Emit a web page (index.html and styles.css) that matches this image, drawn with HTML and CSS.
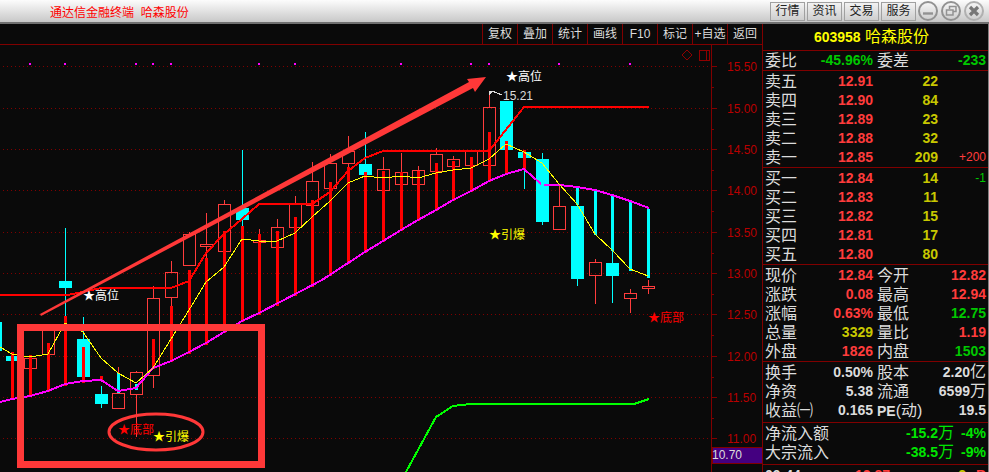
FILE: index.html
```html
<!DOCTYPE html>
<html lang="zh-CN">
<head>
    <meta charset="UTF-8">
    <meta name="viewport" content="width=device-width, initial-scale=1.0">
    <title>通达信金融终端 哈森股份</title>
    <link rel="stylesheet" href="styles.css">
</head>
<body>
    <header class="titlebar">
        <h1>通达信金融终端&nbsp;&nbsp;哈森股份</h1>
        <nav class="menu">
            <button type="button">行情</button>
            <button type="button">资讯</button>
            <button type="button">交易</button>
            <button type="button">服务</button>
        </nav>
        <div class="window-buttons">
            <button type="button" aria-label="最小化">
                <svg viewBox="0 0 20 20"><circle cx="10" cy="10" r="9"/><path d="M5 12.5h10" stroke-width="2.4"/></svg>
            </button>
            <button type="button" aria-label="还原">
                <svg viewBox="0 0 20 20"><circle cx="10" cy="10" r="9"/><path d="M8.5 8V5.5h6.500v5H12.500M5.500 9h6.500v5h-6.500z" stroke-width="1.500"/></svg>
            </button>
            <button type="button" aria-label="关闭">
                <svg viewBox="0 0 20 20"><circle cx="10" cy="10" r="9" stroke="#b0b0b0"/><path d="M6 6l8 8M14 6l-8 8" stroke-width="3.200" stroke="#777"/></svg>
            </button>
        </div>
    </header>

    <main class="main">
        <section class="chart-panel">
            <div class="toolbar">
                <button type="button">复权</button>
                <button type="button">叠加</button>
                <button type="button">统计</button>
                <button type="button">画线</button>
                <button type="button">F10</button>
                <button type="button">标记</button>
                <button type="button">+自选</button>
                <button type="button">返回</button>
            </div>
            <svg class="chart" id="chart" viewBox="0 45 762 427" preserveAspectRatio="xMinYMin meet">
                <g id="grid" class="grid"></g>
                <g class="corner-icons">
                    <path d="M687 50l5 5-5 5-5-5z"/>
                    <path d="M699 50h10v10h-10zM706 50v10"/>
                </g>
                <g id="dots" class="dots"></g>
                <g id="candles" class="candles" transform="translate(.5 .5)"></g>
                <g id="lines" class="lines"></g>
                <g id="notes" class="notes"></g>
                <path class="peak" d="M490 94l2-3h-3v4M492 91l10 4"/>
                <text class="peak-text" x="503" y="100">15.21</text>
                <!-- 标注 -->
                <polygon class="arrow" points="40,314 469,82 467,79 486,77 475,92 473,88 41,316"/>
                <rect class="frame" x="20" y="327" width="241" height="137"/>
                <ellipse class="ring" cx="156" cy="432" rx="47" ry="18"/>
                <rect class="cursor-box" x="712" y="447" width="51" height="16"/>
                <text class="cursor-text" x="712" y="459">10.70</text>
            </svg>
        </section>

        <aside class="quote">
            <h2><b>603958</b> 哈森股份</h2>

            <table class="pairs single">
                <tr><th>委比</th><td class="down">-45.96%</td><th>委差</th><td class="down">-233</td></tr>
            </table>

            <table class="orders">
                <tr><th>卖五</th><td class="up">12.91</td><td class="vol">22</td><td></td></tr>
                <tr><th>卖四</th><td class="up">12.90</td><td class="vol">84</td><td></td></tr>
                <tr><th>卖三</th><td class="up">12.89</td><td class="vol">23</td><td></td></tr>
                <tr><th>卖二</th><td class="up">12.88</td><td class="vol">32</td><td></td></tr>
                <tr><th>卖一</th><td class="up">12.85</td><td class="vol">209</td><td class="up diff">+200</td></tr>
            </table>

            <table class="orders">
                <tr><th>买一</th><td class="up">12.84</td><td class="vol">14</td><td class="down diff">-1</td></tr>
                <tr><th>买二</th><td class="up">12.83</td><td class="vol">11</td><td></td></tr>
                <tr><th>买三</th><td class="up">12.82</td><td class="vol">15</td><td></td></tr>
                <tr><th>买四</th><td class="up">12.81</td><td class="vol">17</td><td></td></tr>
                <tr><th>买五</th><td class="up">12.80</td><td class="vol">80</td><td></td></tr>
            </table>

            <table class="pairs">
                <tr><th>现价</th><td class="up">12.84</td><th>今开</th><td class="up">12.82</td></tr>
                <tr><th>涨跌</th><td class="up">0.08</td><th>最高</th><td class="up">12.94</td></tr>
                <tr><th>涨幅</th><td class="up">0.63%</td><th>最低</th><td class="down">12.75</td></tr>
                <tr><th>总量</th><td class="vol">3329</td><th>量比</th><td class="up">1.19</td></tr>
                <tr><th>外盘</th><td class="up">1826</td><th>内盘</th><td class="down">1503</td></tr>
            </table>

            <table class="pairs loose">
                <tr><th>换手</th><td>0.50%</td><th>股本</th><td>2.20<span class="unit">亿</span></td></tr>
                <tr><th>净资</th><td>5.38</th><th>流通</th><td>6599<span class="unit">万</span></td></tr>
                <tr><th>收益<span class="unit">㈠</span></th><td>0.165</td><th><b>PE</b>(动)</th><td>19.5</td></tr>
            </table>

            <table class="flow loose">
                <tr><th>净流入额</th><td>-15.2<span class="unit">万</span></td><td>-4%</td></tr>
                <tr><th>大宗流入</th><td>-38.5<span class="unit">万</span></td><td>-9%</td></tr>
            </table>

            <table class="ticks">
                <tr><td class="time">09:44</td><td class="up">12.87</td><td class="vol">2</td><td class="up side">B</td></tr>
            </table>
        </aside>
    </main>
    <script src="chart.js"></script>
</body>
</html>
```

FILE: styles.css
```css
* {
    box-sizing: border-box;
}
body {
    margin: 0;
    height: 100vh;
    display: flex;
    flex-direction: column;
    overflow: hidden;
    background: #0a0a0a;
    color: #dcdcdc;
    font-family: "Liberation Sans", "Noto Sans CJK SC", sans-serif;
    font-size: 12px;
}
button {
    margin: 0;
    padding: 0;
    border: 0;
    background: none;
    color: inherit;
    font: inherit;
    white-space: nowrap;
}

/* title bar */
.titlebar {
    display: flex;
    align-items: center;
    flex: none;
    height: 24px;
    padding: 0 5px 0 50px;
    background: linear-gradient(#fcfcfc, #c8c8c8);
    border-bottom: 2px solid #707070;
}
.titlebar h1 {
    flex: 1;
    margin: 0;
    color: #f00;
    font-size: 12px;
    font-weight: normal;
}
.menu {
    display: flex;
    gap: 2px;
}
.menu button {
    width: 35px;
    height: 19px;
    line-height: 16px;
    border: 1px solid #a0a0a0;
    background: linear-gradient(#f2f2f2, #cecece);
    color: #222;
}
.window-buttons {
    display: flex;
    gap: 3px;
    margin-left: 2px;
}
.window-buttons button,
.window-buttons svg {
    display: block;
    width: 20px;
    height: 20px;
}
.window-buttons svg {
    fill: none;
    stroke: #929292;
    stroke-width: 2;
}

/* chart */
.main {
    display: flex;
    flex: 1;
    min-height: 0;
}
.chart-panel {
    flex: 1;
    min-width: 0;
    display: flex;
    flex-direction: column;
}
.toolbar {
    display: flex;
    justify-content: flex-end;
    flex: none;
    height: 21px;
    border-bottom: 1px solid #800000;
}
.toolbar button {
    width: 35px;
    line-height: 20px;
    border-left: 1px solid #800000;
}
.chart {
    display: block;
    width: 100%;
    flex: 1;
    min-height: 0;
    shape-rendering: crispEdges;
}
.chart path,
.chart polyline {
    fill: none;
}
.grid line {
    stroke: #800000;
}
.grid .dotted {
    stroke-dasharray: 1 3;
}
.grid text {
    fill: #b80000;
}
.corner-icons {
    stroke: #900000;
}
.dots rect {
    fill: #f0f;
}
.candles .rise {
    fill: none;
    stroke: #ff3c3c;
}
.candles .fall {
    fill: #0ff;
    stroke: #0ff;
}
.candles .bar-red {
    stroke: #f00;
    stroke-width: 3;
}
.candles .bar-cyan {
    stroke: #0ff;
    stroke-width: 3;
}
.lines .short {
    stroke: #ff0;
}
.lines .mid {
    stroke: #f0f;
    stroke-width: 2;
}
.lines .top {
    stroke: #f00;
    stroke-width: 2;
}
.lines .base {
    stroke: #0f0;
    stroke-width: 2;
}
.notes .high {
    fill: #fff;
}
.notes .bottom {
    fill: #f00;
}
.notes .burst {
    fill: #ff0;
}
.peak {
    stroke: #dcdcdc;
}
.peak-text,
.cursor-text {
    fill: #dcdcdc;
}
.arrow {
    fill: #ff3838;
    shape-rendering: auto;
}
.frame {
    fill: none;
    stroke: #ff3838;
    stroke-width: 7;
}
.ring {
    fill: none;
    stroke: #ff3838;
    stroke-width: 3;
    shape-rendering: auto;
}
.cursor-box {
    fill: #440080;
    stroke: #800000;
}

/* quote panel */
.quote {
    flex: none;
    width: 227px;
    overflow: hidden;
    border-left: 1px solid #800000;
    border-right: 1px solid #808080;
}
.quote h2 {
    margin: 0;
    padding-right: 8px;
    height: 26px;
    line-height: 26px;
    color: #ff0;
    font-size: 16px;
    font-weight: normal;
    text-align: center;
}
.quote h2 b {
    font-size: 14px;
}
.quote table {
    width: 100%;
    padding: 1px 2px 0;
    border-top: 1px solid #800000;
    border-spacing: 0;
    table-layout: fixed;
}
.quote .single {
    padding-top: 0;
}
.quote .loose {
    padding-bottom: 2px;
}
.quote th,
.quote td {
    height: 19px;
    padding: 0;
    line-height: 19px;
    white-space: nowrap;
}
.quote th {
    width: 50px;
    font-size: 16px;
    font-weight: normal;
    text-align: left;
}
.quote td {
    font-size: 14px;
    font-weight: bold;
    text-align: right;
}
.quote th b {
    font-size: 14px;
    line-height: 1;
}
.quote .unit {
    font-size: 16px;
    font-weight: normal;
    line-height: 1;
}
.pairs td,
.orders td {
    width: 58px;
}
.quote .pairs td + th {
    padding-left: 4px;
}
.orders td + td {
    width: 65px;
}
.pairs td:last-child,
.orders td:last-child {
    width: auto;
}
.quote .diff {
    font-size: 12px;
    font-weight: normal;
}
.quote .flow th {
    width: 90px;
}
.flow td {
    color: #00e600;
}
.flow td + td {
    width: 32px;
}
.quote .time {
    width: 50px;
    text-align: left;
}
.ticks .vol {
    width: 76px;
}
.ticks .side {
    width: 20px;
}
.quote .up {
    color: #ff3c3c;
}
.quote .down {
    color: #00c800;
}
.quote .vol {
    color: #c8c800;
}
```

FILE: chart.js
```js
const NS = "http://www.w3.org/2000/svg";

function draw(parent, tag, attrs, text) {
    const el = document.createElementNS(NS, tag);
    for (const key in attrs) el.setAttribute(key, attrs[key]);
    if (text) el.textContent = text;
    document.getElementById(parent).appendChild(el);
}

// price grid and axis
const rows = [66, 108, 149, 190, 232, 273, 314, 356, 397, 438];
rows.forEach((y, i) => {
    draw("grid", "line", { class: "dotted", x1: 3, x2: 711, y1: y + 0.5, y2: y + 0.5 });
    draw("grid", "line", { x1: 712, x2: 717, y1: y + 0.5, y2: y + 0.5 });
    if (i < 9) draw("grid", "line", { x1: 712, x2: 714, y1: y + 21.5, y2: y + 21.5 });
    draw("grid", "text", { x: 727, y: y + 5 }, (15.5 - i * 0.5).toFixed(2));
});
draw("grid", "line", { x1: 711.5, x2: 711.5, y1: 45, y2: 472 });

[29, 64, 135, 152, 170, 258, 294, 400, 470, 488, 558, 629].forEach(x => {
    draw("dots", "rect", { x: x, y: 63, width: 2, height: 2 });
});

// x, high, body top, body bottom, low, rise(1)/fall(0), bar from, bar to, cyan bar
const candles = [
    [-5, 322, 322, 350, 350, 0],
    [12, 356, 356, 360, 360, 0, 351, 399],
    [30, 358, 358, 368, 368, 1, 354, 396],
    [48, 328, 328, 354, 354, 1, 342, 391],
    [65, 227, 281, 287, 315, 0, 315, 385],
    [83, 316, 339, 376, 376, 0, 346, 382],
    [101, 385, 394, 403, 407, 0, 375, 379],
    [118, 366, 393, 408, 408, 1, 372, 392, 1],
    [136, 370, 372, 394, 436, 1, 383, 389, 1],
    [153, 285, 298, 375, 387, 1, 338, 368],
    [171, 260, 272, 297, 305, 1, 305, 361],
    [189, 231, 234, 265, 265, 1, 269, 353],
    [206, 212, 244, 246, 257, 1, 257, 344],
    [224, 199, 204, 251, 251, 1, 230, 332],
    [242, 149, 208, 219, 225, 0, 225, 321],
    [259, 228, 240, 242, 242, 1, 233, 314],
    [277, 218, 227, 247, 247, 1, 230, 305],
    [295, 195, 204, 227, 227, 1, 216, 295],
    [312, 161, 181, 205, 205, 1, 199, 286],
    [330, 153, 163, 188, 188, 1, 181, 275],
    [348, 135, 151, 163, 166, 1, 166, 263],
    [365, 131, 164, 174, 174, 0, 171, 252],
    [383, 156, 169, 190, 190, 1, 170, 241],
    [401, 152, 172, 184, 184, 1, 171, 230],
    [418, 165, 170, 184, 184, 1, 170, 220],
    [436, 147, 154, 171, 171, 1, 162, 210],
    [453, 155, 159, 166, 166, 1, 160, 200],
    [471, 149, 151, 165, 165, 1, 156, 191],
    [489, 92, 107, 165, 165, 1, 131, 181],
    [506, 101, 101, 149, 149, 0, 140, 174],
    [524, 149, 152, 157, 188, 0, 149, 169],
    [542, 152, 159, 221, 224, 0],
    [559, 183, 206, 229, 229, 1, 183, 185, 1],
    [577, 206, 206, 278, 285, 0, 187, 204, 1],
    [595, 258, 262, 275, 303, 1, 190, 234, 1],
    [612, 250, 263, 275, 302, 0, 195, 250, 1],
    [630, 288, 293, 298, 312, 1, 201, 270, 1],
    [648, 279, 286, 288, 293, 1, 208, 277, 1]
];
candles.forEach(([x, high, top, bottom, low, rise, from, to, cyan]) => {
    const cls = rise ? "rise" : "fall";
    if (high < top) draw("candles", "line", { class: cls, x1: x, x2: x, y1: high, y2: top });
    if (low > bottom) draw("candles", "line", { class: cls, x1: x, x2: x, y1: bottom, y2: low });
    draw("candles", "rect", { class: cls, x: x - 6, y: top, width: 12, height: bottom - top });
    if (to) draw("candles", "line", { class: cyan ? "bar-cyan" : "bar-red", x1: x, x2: x, y1: from, y2: to });
});

// indicator lines
const lines = [
    ["top", "0,295 68,295 101,288 171,288 189,281 206,253 224,234 242,219 259,204 312,204 330,192 348,171 365,158 383,151 489,151 524,107 649,107"],
    ["mid", "0,402 12,399 30,396 48,391 65,384 83,381 101,380 118,391 136,388 153,368 171,361 189,352 206,343 224,332 242,321 259,313 322,280 348,263 365,252 383,241 401,230 418,220 436,210 453,200 471,191 489,181 506,174 524,169 541,184"],
    ["mid", "544,185 559,185 577,187 595,190 612,195 630,201 649,208"],
    ["short", "0,347 12,354 30,357 48,354 65,323 83,332 101,358 118,373 136,383 153,368 171,339 189,310 206,282 224,267 242,239 259,241 277,241 295,233 312,217 330,201 348,183 365,176 383,178 401,176 418,178 436,173 453,170 471,168 489,159 506,144 524,152 542,163 559,184 577,204 595,234 612,250 630,269 648,276"],
    ["base", "406,472 436,417 453,406 471,404 634,404 649,399"]
];
lines.forEach(([cls, points]) => draw("lines", "polyline", { class: cls, points: points }));

const notes = [
    ["high", 83, 300, "★高位"],
    ["high", 506, 81, "★高位"],
    ["bottom", 118, 434, "★底部"],
    ["burst", 153, 441, "★引爆"],
    ["burst", 489, 239, "★引爆"],
    ["bottom", 648, 322, "★底部"]
];
notes.forEach(([cls, x, y, text]) => draw("notes", "text", { class: cls, x: x, y: y }, text));
```
